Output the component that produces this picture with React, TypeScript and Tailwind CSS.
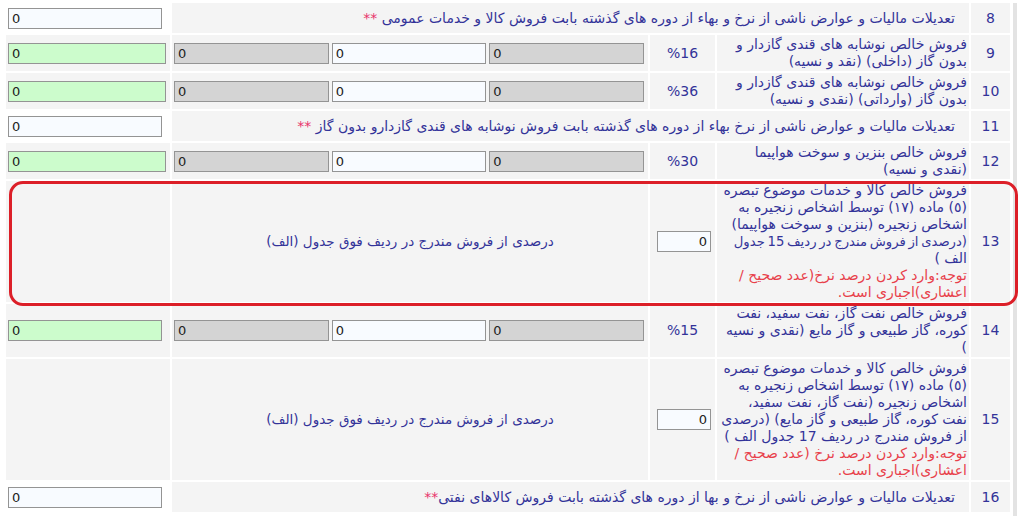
import React from "react";

const FONT = { fontFamily: '"DejaVu Sans", "Noto Sans", sans-serif' };

function Field({ bg, right }: { bg: string; right?: boolean }) {
  return (
    <input
      readOnly
      value="0"
      dir="ltr"
      style={FONT}
      className={`h-[21px] w-full min-w-0 border border-[#949494] px-[3px] text-[13px] text-[#222] outline-none ${bg} ${right ? "text-right" : "text-left"}`}
    />
  );
}

function Num({ n }: { n: number }) {
  return (
    <div className="flex items-center justify-center bg-[#f4f4f4] text-[14px] text-[#333399]">
      {n}
    </div>
  );
}

function SpanRow({ n, text, stars }: { n: number; text: string; stars: string }) {
  return (
    <>
      <Num n={n} />
      <div className="col-span-3 flex h-[30px] items-center bg-[#f4f4f4] pr-[14px] text-[14px] text-[#333399]">
        <span>
          {text}
          <span className="text-[#e8336a]">{stars}</span>
        </span>
      </div>
      <div className="flex items-center bg-white pl-[2px] pr-[8px]">
        <Field bg="bg-[#f8fbff]" />
      </div>
    </>
  );
}

function PctRow({ n, text, pct, greenPr }: { n: number; text: string; pct: string; greenPr?: boolean }) {
  return (
    <>
      <Num n={n} />
      <div className="bg-[#f4f4f4] px-[2px] py-[1px] text-[14px] leading-[17px] text-[#333399]">{text}</div>
      <div className="flex items-center justify-center bg-[#f4f4f4] text-[14px] text-[#333399]">{pct}</div>
      <div className="flex items-center gap-[3px] bg-[#f4f4f4] pl-[2px] pr-[4px]" dir="ltr">
        <Field bg="bg-[#d4d4d4]" />
        <Field bg="bg-[#f8fbff]" />
        <Field bg="bg-[#d4d4d4]" />
      </div>
      <div className={`flex items-center bg-[#f4f4f4] pl-[2px] ${greenPr ? "pr-[8px]" : "pr-[4px]"}`}>
        <Field bg="bg-[#ccfccc]" />
      </div>
    </>
  );
}

function NoteRow({ n, children, note }: { n: number; children: React.ReactNode; note: string }) {
  return (
    <>
      <Num n={n} />
      <div className="bg-[#f4f4f4] px-[2px] py-[1px] text-[14px] leading-[17px] text-[#333399]">
        {children}
        <br />
        <span className="text-[#e8404a]">{note}</span>
      </div>
      <div className="flex items-center bg-[#f4f4f4] pl-[7px] pr-[4px]">
        <Field bg="bg-[#f8fbff]" right />
      </div>
      <div className="flex items-center justify-center bg-[#f4f4f4] text-[13.5px] text-[#333399]">
        درصدی از فروش مندرج در ردیف فوق جدول (الف)
      </div>
      <div className="bg-[#f4f4f4]" />
    </>
  );
}

export default function App() {
  return (
    <div className="relative flex min-h-[516px] w-[1024px] bg-white pl-[6px] pt-[3px]" style={FONT}>
      <div
        dir="rtl"
        className="grid w-[1004px] grid-cols-[39px_252px_65px_476px_164px] content-start gap-[2px]"
      >
        <SpanRow
          n={8}
          text="تعدیلات مالیات و عوارض ناشی از نرخ و بهاء از دوره های گذشته بابت فروش کالا و خدمات عمومی "
          stars="**"
        />
        <PctRow n={9} text="فروش خالص نوشابه های قندی گازدار و بدون گاز (داخلی) (نقد و نسیه)" pct="%16" />
        <PctRow n={10} text="فروش خالص نوشابه های قندی گازدار و بدون گاز (وارداتی) (نقدی و نسیه)" pct="%36" />
        <SpanRow
          n={11}
          text="تعدیلات مالیات و عوارض ناشی از نرخ بهاء از دوره های گذشته بابت فروش نوشابه های قندی گازدارو بدون گاز "
          stars="**"
        />
        <PctRow n={12} text="فروش خالص بنزین و سوخت هواپیما (نقدی و نسیه)" pct="%30" />
        <NoteRow n={13} note="توجه:وارد کردن درصد نرخ(عدد صحیح / اعشاری)اجباری است.">
          فروش خالص کالا و خدمات موضوع تبصره (٥) ماده (١٧) توسط اشخاص زنجیره به اشخاص زنجیره (بنزین و سوخت هواپیما)
          <br />
          <span className="whitespace-nowrap text-[13.2px] [word-spacing:-1.5px]">(درصدی از فروش مندرج در ردیف 15 جدول</span>
          <br />
          الف )
        </NoteRow>
        <PctRow
          n={14}
          text="فروش خالص نفت گاز، نفت سفید، نفت کوره، گاز طبیعی و گاز مایع (نقدی و نسیه )"
          pct="%15"
          greenPr
        />
        <NoteRow n={15} note="توجه:وارد کردن درصد نرخ (عدد صحیح / اعشاری)اجباری است.">
          فروش خالص کالا و خدمات موضوع تبصره (٥) ماده (١٧) توسط اشخاص زنجیره به اشخاص زنجیره (نفت گاز، نفت سفید، نفت کوره، گاز طبیعی و گاز مایع) (درصدی از فروش مندرج در ردیف 17 جدول الف )
        </NoteRow>
        <SpanRow
          n={16}
          text="تعدیلات مالیات و عوارض ناشی از نرخ و بها از دوره های گذشته بابت فروش کالاهای نفتی"
          stars="**"
        />
      </div>
      <div className="ml-[3px] w-[4px] self-stretch bg-[#e3e3e3]" />
      <div className="pointer-events-none absolute left-[9px] top-[181px] h-[125px] w-[1009px] rounded-[14px] border-[3px] border-[#dc1f28]" />
    </div>
  );
}
